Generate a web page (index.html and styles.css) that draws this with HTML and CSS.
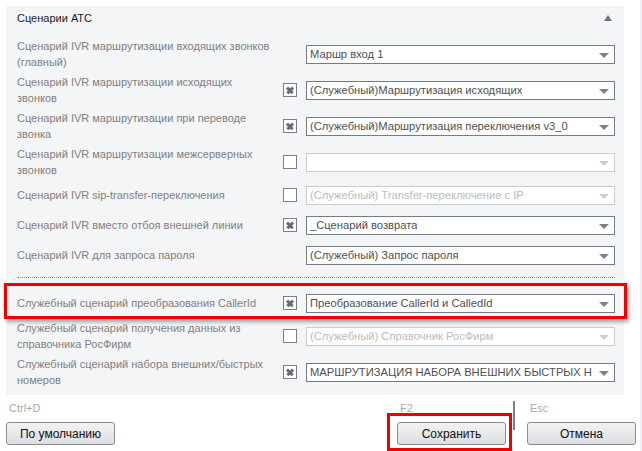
FILE: index.html
```html
<!DOCTYPE html>
<html lang="ru">
<head>
  <meta charset="UTF-8" />
  <title>Сценарии АТС</title>
  <link rel="stylesheet" href="styles.css">
</head>
<body>
  <section class="panel">
    <div class="panel-head">
      <span class="panel-title">Сценарии АТС</span>
      <span class="collapse"></span>
    </div>

    <div class="row">
      <div class="label">Сценарий IVR маршрутизации входящих звонков (главный)</div>
      <div class="check-cell"></div>
      <div class="select"><span>Маршр вход 1</span></div>
    </div>
    <div class="row">
      <div class="label">Сценарий IVR маршрутизации исходящих звонков</div>
      <div class="check-cell"><span class="check on"></span></div>
      <div class="select"><span>(Служебный)Маршрутизация исходящих</span></div>
    </div>
    <div class="row">
      <div class="label">Сценарий IVR маршрутизации при переводе звонка</div>
      <div class="check-cell"><span class="check on"></span></div>
      <div class="select"><span>(Служебный)Маршрутизация переключения v3_0</span></div>
    </div>
    <div class="row">
      <div class="label">Сценарий IVR маршрутизации межсерверных звонков</div>
      <div class="check-cell"><span class="check"></span></div>
      <div class="select disabled"><span></span></div>
    </div>
    <div class="row">
      <div class="label">Сценарий IVR sip-transfer-переключения</div>
      <div class="check-cell"><span class="check"></span></div>
      <div class="select disabled"><span>(Служебный) Transfer-переключение с IP</span></div>
    </div>
    <div class="row">
      <div class="label">Сценарий IVR вместо отбоя внешней линии</div>
      <div class="check-cell"><span class="check on"></span></div>
      <div class="select"><span>_Сценарий возврата</span></div>
    </div>
    <div class="row">
      <div class="label">Сценарий IVR для запроса пароля</div>
      <div class="check-cell"></div>
      <div class="select"><span>(Служебный) Запрос пароля</span></div>
    </div>

    <div class="divider"></div>

    <div class="row marked">
      <div class="label">Служебный сценарий преобразования CallerId</div>
      <div class="check-cell"><span class="check on"></span></div>
      <div class="select"><span>Преобразование CallerId и CalledId</span></div>
    </div>
    <div class="row">
      <div class="label">Служебный сценарий получения данных из справочника РосФирм</div>
      <div class="check-cell"><span class="check"></span></div>
      <div class="select disabled"><span>(Служебный) Справочник РосФирм</span></div>
    </div>
    <div class="row">
      <div class="label">Служебный сценарий набора внешних/быстрых номеров</div>
      <div class="check-cell"><span class="check on"></span></div>
      <div class="select"><span>МАРШРУТИЗАЦИЯ НАБОРА ВНЕШНИХ БЫСТРЫХ НОМЕРОВ</span></div>
    </div>
  </section>

  <footer class="actions">
    <div class="action">
      <div class="hotkey">Ctrl+D</div>
      <button class="btn">По умолчанию</button>
    </div>
    <div class="action-right">
      <div class="action marked">
        <div class="hotkey">F2</div>
        <button class="btn">Сохранить</button>
      </div>
      <div class="sep"></div>
      <div class="action">
        <div class="hotkey">Esc</div>
        <button class="btn">Отмена</button>
      </div>
    </div>
  </footer>
</body>
</html>
```

FILE: styles.css
```css
body {
  margin: 0;
  background: #ffffff;
  font-family: "Liberation Sans", Arial, sans-serif;
  font-size: 11px;
  color: #808080;
  width: 642px;
  height: 451px;
  overflow: hidden;
  box-shadow: inset -2px 0 0 #eef0f3;
}

.panel {
  margin: 6px 18px 0 6px;
  padding: 0 9px 5px 11px;
  background: #f4f5f7;
}

.panel-head {
  height: 30px;
  display: flex;
  justify-content: space-between;
  align-items: flex-start;
  padding-top: 4px;
  box-sizing: border-box;
  line-height: 16px;
}

.panel-title {
  color: #1c1c1c;
}

.collapse {
  width: 0;
  height: 0;
  margin: 5px 3px 0 0;
  border-left: 4px solid transparent;
  border-right: 4px solid transparent;
  border-bottom: 6px solid #6d7580;
}

.row {
  display: flex;
  align-items: center;
  min-height: 30px;
  padding: 2px 0;
  box-sizing: border-box;
  position: relative;
}

.label {
  flex: 0 0 258px;
  margin-right: 8px;
  line-height: 16px;
}

.check-cell {
  flex: 0 0 14px;
  height: 14px;
  margin-right: 9px;
}

.check {
  display: block;
  width: 14px;
  height: 14px;
  box-sizing: border-box;
  border: 1px solid #7a8089;
  background: #ffffff;
  position: relative;
}

.check.on::before,
.check.on::after {
  content: "";
  position: absolute;
  left: 2px;
  top: 4.5px;
  width: 8px;
  height: 2.5px;
  background: #686c72;
  transform: rotate(45deg);
}

.check.on::after {
  transform: rotate(-45deg);
}

.select {
  flex: 1;
  height: 19px;
  box-sizing: border-box;
  border: 1px solid #737d89;
  background: #ffffff;
  color: #4f4f4f;
  font-size: 11.2px;
  display: flex;
  align-items: center;
  padding: 0 22px 0 3px;
  position: relative;
  white-space: nowrap;
  overflow: hidden;
}

.select span {
  overflow: hidden;
}

.select::after {
  content: "";
  position: absolute;
  right: 5px;
  top: 7px;
  border-left: 5px solid transparent;
  border-right: 5px solid transparent;
  border-top: 5px solid #7b828c;
}

.select.disabled {
  border-color: #c9cdd2;
  color: #b9bcc0;
}

.select.disabled::after {
  border-top-color: #c9cdd2;
}

.divider {
  margin: 7px 0 10px;
  border-top: 1px dotted #8c8c8c;
}

.row.marked::before {
  content: "";
  position: absolute;
  left: -13px;
  right: -12px;
  top: -5px;
  bottom: -1px;
  border: 3px solid #f00000;
  box-shadow: 2px 3px 4px rgba(0, 0, 0, 0.35);
  pointer-events: none;
}

.actions {
  display: flex;
  justify-content: space-between;
  padding: 6px 6px 0 6px;
}

.action-right {
  display: flex;
  align-items: flex-start;
}

.action {
  position: relative;
  display: flex;
  flex-direction: column;
}

.hotkey {
  color: #ababab;
  line-height: 14px;
  padding-left: 3px;
  margin-bottom: 7px;
}

.btn {
  width: 109px;
  height: 23px;
  border: 1px solid #8a8d92;
  border-radius: 3px;
  background: linear-gradient(#f2f3f5, #dcdee2);
  font-family: "Liberation Sans", Arial, sans-serif;
  font-size: 12px;
  color: #111111;
  padding: 0;
}

.sep {
  width: 2px;
  height: 29px;
  margin: 0 12px 0 7px;
  background: #7d7f83;
}

.action.marked::before {
  content: "";
  position: absolute;
  left: -10px;
  right: -6px;
  top: 12px;
  bottom: -6px;
  border: 3px solid #f00000;
  pointer-events: none;
}
```
